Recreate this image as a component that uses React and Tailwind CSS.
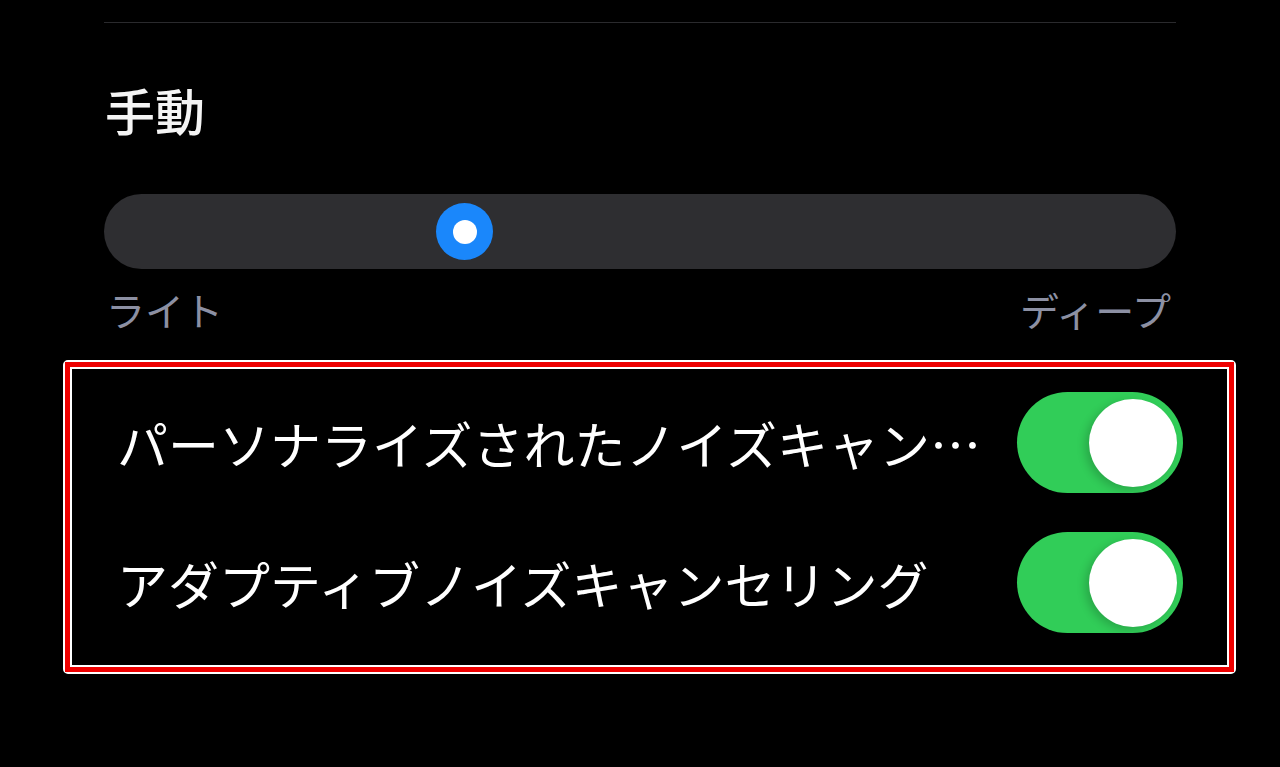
export default function App() {
  const font = { fontFamily: '"Noto Sans CJK JP", "Noto Sans", sans-serif' };

  const rows = [
    { label: "パーソナライズされたノイズキャンセリング", on: true },
    { label: "アダプティブノイズキャンセリング", on: true },
  ];

  return (
    <div className="min-h-[767px] w-[1280px] bg-black overflow-hidden" style={font}>
      <div className="pt-[22px] px-[104px]">
        <div className="h-px bg-[#2a2a2d]" />

        <h2 className="mt-[61px] ml-[1px] text-[50px] leading-[50px] font-medium text-[#f4f4f4]">
          手動
        </h2>

        <div className="mt-[60px] relative h-[75px] rounded-full bg-[#2e2e31]">
          <div className="absolute left-[332px] top-[9px] w-[57px] h-[57px] rounded-full bg-[#1a87fb] flex items-center justify-center">
            <div className="w-[24px] h-[24px] rounded-full bg-white" />
          </div>
        </div>

        <div className="mt-[21px] flex justify-between text-[39px] leading-[39px] text-[#8c90a3]">
          <span className="ml-[2px]">ライト</span>
          <span className="mr-[5px]">ディープ</span>
        </div>
      </div>

      <div className="mt-[31px] ml-[63px] w-[1173px] rounded-[5px] border-2 border-white">
        <div className="border-[5px] border-[#ee0000]">
          <div className="border-2 border-white pt-[23px] pb-[32px] pl-[45px] pr-[44px] flex flex-col gap-[39px]">
            {rows.map((row) => (
              <div key={row.label} className="flex items-center h-[101px] gap-[22px]">
                <span className="flex-1 min-w-0 truncate text-[51px] leading-[62px] text-white">
                  {row.label}
                </span>
                <div className="w-[166px] h-[101px] rounded-full bg-[#31cd58] flex items-center justify-end pr-[6px] shrink-0">
                  <div className="w-[88px] h-[88px] rounded-full bg-white shadow-[-4px_3px_8px_rgba(0,0,0,0.18)]" />
                </div>
              </div>
            ))}
          </div>
        </div>
      </div>
    </div>
  );
}
